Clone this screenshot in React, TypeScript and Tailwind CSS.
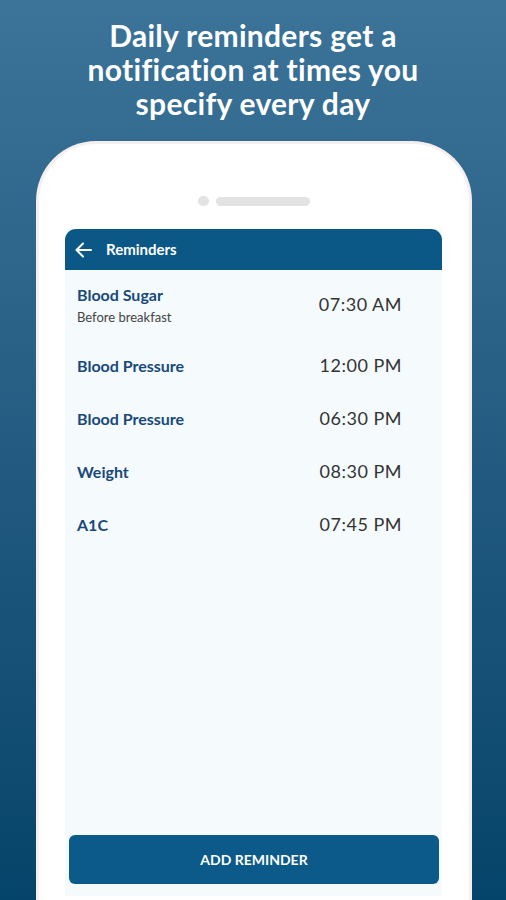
import React from "react";

const rows = [
  { title: "Blood Sugar", sub: "Before breakfast", time: "07:30 AM" },
  { title: "Blood Pressure", time: "12:00 PM" },
  { title: "Blood Pressure", time: "06:30 PM" },
  { title: "Weight", time: "08:30 PM" },
  { title: "A1C", time: "07:45 PM" },
];

export default function App() {
  return (
    <div
      className="w-[506px] h-[900px] overflow-hidden bg-gradient-to-b from-[#3b7399] to-[#05446a] flex flex-col"
      style={{ fontFamily: "Lato, 'Open Sans', sans-serif" }}
    >
      <h1 className="pt-[18px] text-center text-white font-bold text-[30px] leading-[34px] tracking-[0.3px]">
        Daily reminders get a
        <br />
        notification at times you
        <br />
        specify every day
      </h1>
      <div className="mt-[21px] ml-[36px] w-[436px] h-[780px] shrink-0 rounded-t-[60px] bg-white border-[3px] border-b-0 border-[#f6efef] flex flex-col items-center">
        <div className="mt-[52px] flex items-center gap-[7px]">
          <div className="w-[11px] h-[10px] rounded-full bg-[#e3e3e3]" />
          <div className="w-[94px] h-[9px] rounded-full bg-[#e3e3e3]" />
        </div>
        <div className="mt-[23px] ml-[-1px] w-[377px] h-[667px] bg-[#f5fafd] flex flex-col">
          <div className="h-[41px] rounded-t-[11px] bg-[#0b5886] flex items-center pl-[10px]">
            <svg width="17" height="16" viewBox="0 0 17 16" fill="none">
              <path d="M16 8H2M8 1.5L1.5 8L8 14.5" stroke="white" strokeWidth="2" strokeLinecap="round" strokeLinejoin="round" />
            </svg>
            <span className="ml-[14px] text-white text-[15px] font-bold">Reminders</span>
          </div>
          <div className="flex flex-col">
            {rows.map((r, i) => (
              <div
                key={i}
                className={`flex items-center justify-between pl-[12px] pr-[40px] ${i === 0 ? "h-[69px]" : "h-[53px]"}`}
              >
                <div className="flex flex-col">
                  <span className="text-[16px] leading-[20px] font-bold text-[#18497a]">{r.title}</span>
                  {r.sub && <span className="mt-[4px] text-[13px] leading-[16px] text-[#444]">{r.sub}</span>}
                </div>
                <span className="text-[18px] text-[#333] tracking-[0.5px]">{r.time}</span>
              </div>
            ))}
          </div>
          <div className="flex-1" />
          <button className="mb-[12px] ml-[4px] w-[370px] h-[49px] rounded-[6px] bg-[#0b5a89] text-white text-[14px] font-bold">
            ADD REMINDER
          </button>
        </div>
      </div>
    </div>
  );
}
